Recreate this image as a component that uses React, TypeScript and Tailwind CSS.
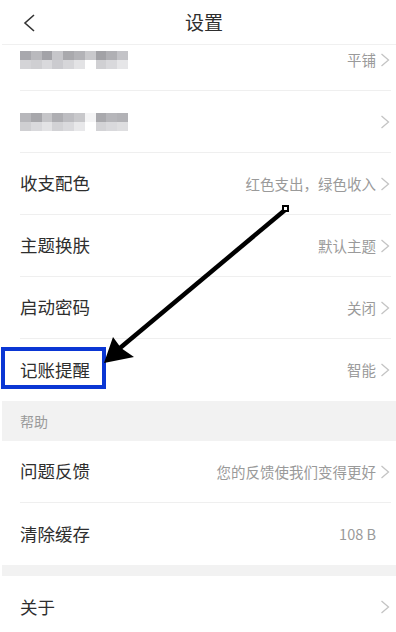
import type { ReactNode } from 'react';

const font = { fontFamily: '"Noto Sans CJK SC", "Noto Sans", sans-serif' };

const mosaicA = [
  ['bg-[#a8a8ad]', 'bg-[#b9b9bd]', 'bg-[#a3a3a8]', 'bg-[#c6c6ca]', 'bg-[#a9a9ad]', 'bg-[#b3b3b7]', 'bg-[#c9c9cc]', 'bg-[#a2a2a6]', 'bg-[#b0b0b4]', 'bg-[#c3c3c7]'],
  ['bg-[#d4d4d7]', 'bg-[#cfcfd2]', 'bg-[#d9d9dc]', 'bg-[#cbcbcf]', 'bg-[#d6d6d9]', 'bg-[#e3e3e5]', 'bg-[#ffffff]', 'bg-[#d0d0d3]', 'bg-[#d9d9dc]', 'bg-[#e6e6e8]'],
];

const mosaicB = [
  ['bg-[#b7b7bb]', 'bg-[#a7a7ab]', 'bg-[#c5c5c8]', 'bg-[#aeaeb2]', 'bg-[#bdbdc1]', 'bg-[#c8c8cb]', 'bg-[#f4f4f5]', 'bg-[#a9a9ad]', 'bg-[#b6b6ba]', 'bg-[#b2b2b6]'],
  ['bg-[#cfcfd2]', 'bg-[#d9d9dc]', 'bg-[#e3e3e5]', 'bg-[#d2d2d5]', 'bg-[#dadadd]', 'bg-[#e8e8ea]', 'bg-[#ffffff]', 'bg-[#d3d3d6]', 'bg-[#d9d9dc]', 'bg-[#dedee0]'],
];

function Mosaic({ rows }: { rows: string[][] }) {
  return (
    <div className="flex flex-col">
      {rows.map((row, i) => (
        <div key={i} className="flex">
          {row.map((c, j) => (
            <div key={j} className={`h-[9px] w-[10.8px] ${c}`} />
          ))}
        </div>
      ))}
    </div>
  );
}

function Chevron({ hidden }: { hidden?: boolean }) {
  return (
    <svg
      width="10"
      height="14"
      viewBox="0 0 10 14"
      className={hidden ? 'invisible' : ''}
      fill="none"
      stroke="#c4c4c4"
      strokeWidth="1.3"
    >
      <path d="M1.5 1 L8.5 7 L1.5 13" />
    </svg>
  );
}

function Row({
  label,
  value,
  noChevron,
  border = true,
  className = '',
}: {
  label: ReactNode;
  value?: string;
  noChevron?: boolean;
  border?: boolean;
  className?: string;
}) {
  return (
    <div
      className={`ml-[18px] mr-[5px] flex h-[62px] items-center justify-between pr-[1px] ${
        border ? 'border-b border-[#efefef]' : ''
      } ${className}`}
    >
      <div className="text-[17.5px] text-[#2e2e2e]">{label}</div>
      <div className="flex items-center">
        {value && <span className="mr-[4px] text-[14.5px] text-[#9a9a9a]">{value}</span>}
        <Chevron hidden={noChevron} />
      </div>
    </div>
  );
}

export default function App() {
  return (
    <div className="relative h-[632px] w-[396px] overflow-hidden bg-white pl-[2px]" style={font}>
      <header className="relative flex h-[45px] items-center justify-center border-b border-[#f0f0f0]">
        <svg
          className="absolute left-[20px] top-[14px]"
          width="14"
          height="18"
          viewBox="0 0 14 18"
          fill="none"
          stroke="#333333"
          strokeWidth="1.6"
        >
          <path d="M12 1 L3 9 L12 17" />
        </svg>
        <h1 className="pl-[10px] text-[19px] text-[#2e2e2e]">设置</h1>
      </header>

      <div className="flex flex-col">
        <Row className="-mt-[16px]" label={<Mosaic rows={mosaicA} />} value="平铺" />
        <Row label={<Mosaic rows={mosaicB} />} />
        <Row label="收支配色" value="红色支出，绿色收入" />
        <Row label="主题换肤" value="默认主题" />
        <Row label="启动密码" value="关闭" />
        <Row label="记账提醒" value="智能" border={false} className="h-[61px]" />

        <div className="flex h-[40px] items-center bg-[#f2f2f2] pl-[18px] text-[14px] text-[#9a9a9a]">
          帮助
        </div>

        <Row label="问题反馈" value="您的反馈使我们变得更好" />
        <Row label="清除缓存" value="108 B" noChevron border={false} />

        <div className="h-[11px] bg-[#f2f2f2]" />

        <Row label="关于" border={false} />
      </div>

      <div className="absolute left-[1px] top-[347px] h-[42px] w-[105px] border-[4px] border-[#0a36d4]" />

      <svg className="pointer-events-none absolute left-0 top-0" width="396" height="632">
        <line x1="285" y1="210" x2="120" y2="348" stroke="#000" strokeWidth="4.5" />
        <polygon points="104,363 113,337 121,348 134,357" fill="#000" />
        <rect x="283" y="206" width="5" height="5" fill="#fff" stroke="#000" strokeWidth="2" />
      </svg>
    </div>
  );
}
